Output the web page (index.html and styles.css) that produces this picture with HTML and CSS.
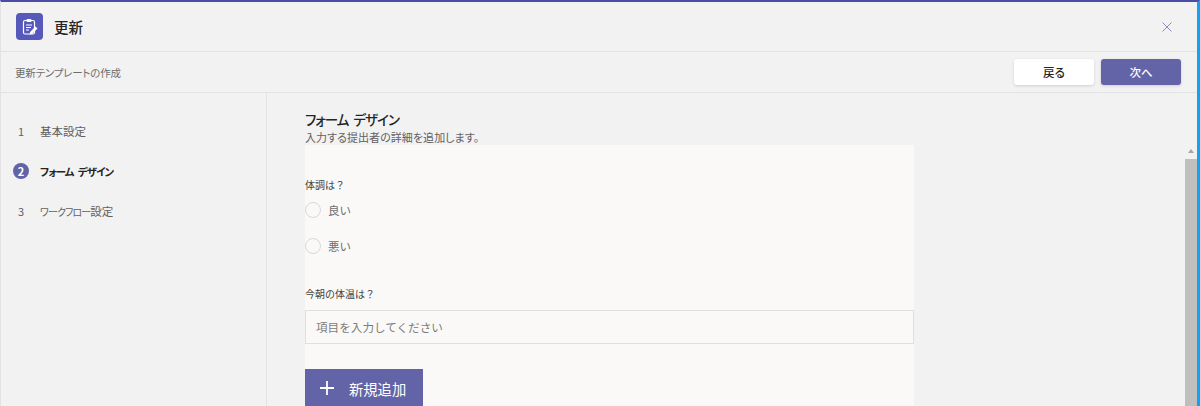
FILE: index.html
```html
<!DOCTYPE html>
<html lang="ja">
<head>
<meta charset="utf-8">
<title>更新</title>
<link rel="stylesheet" href="styles.css">
</head>
<body>
<div class="window">
  <header class="title-bar">
    <div class="title-left">
      <span class="app-icon">
        <svg viewBox="0 0 16 18" width="16" height="18" fill="none">
          <rect x="1.5" y="2.5" width="11" height="13.5" rx="1.5" stroke="#fff" stroke-width="1.2"/>
          <rect x="4.5" y="1" width="5" height="3" rx="1" fill="#fff"/>
          <path d="M4 7h6M4 9.5h5M4 12h3" stroke="#fff" stroke-width="1"/>
          <path d="M7.5 16.5l.6-2.6 5.4-5.4 2 2-5.4 5.4z" fill="#fff"/>
        </svg>
      </span>
      <h1 class="title">更新</h1>
    </div>
    <svg class="close" viewBox="0 0 10 10" width="10" height="10"><path d="M.5.5l9 9M9.5.5l-9 9" stroke="#8d8cc0" stroke-width="1" fill="none"/></svg>
  </header>
  <div class="sub-bar">
    <span class="sub-title">更新テンプレートの作成</span>
    <div class="actions">
      <button class="btn btn-back">戻る</button>
      <button class="btn btn-next">次へ</button>
    </div>
  </div>
  <div class="body">
    <nav class="steps">
      <div class="step"><span class="step-num">1</span><span>基本設定</span></div>
      <div class="step step-active"><span class="step-num step-badge">2</span><span class="kana-bold">フォーム デザイン</span></div>
      <div class="step"><span class="step-num">3</span><span><span class="kana">ワークフロー</span>設定</span></div>
    </nav>
    <main class="content">
      <h2 class="heading">フォーム デザイン</h2>
      <p class="desc">入力する提出者の詳細を追加します。</p>
      <section class="form-card">
        <div class="question">体調は？</div>
        <label class="option"><span class="radio"></span>良い</label>
        <label class="option"><span class="radio"></span>悪い</label>
        <div class="question q-second">今朝の体温は？</div>
        <div class="text-input">項目を入力してください</div>
        <button class="add-btn">
          <svg viewBox="0 0 14 14" width="14" height="14"><path d="M7 0v14M0 7h14" stroke="#fff" stroke-width="1.8" fill="none"/></svg>
          <span>新規追加</span>
        </button>
      </section>
    </main>
    <div class="scrollbar">
      <span class="scroll-arrow"></span>
      <span class="scroll-thumb"></span>
    </div>
  </div>
</div>
</body>
</html>
```
FILE: styles.css
```css
* { box-sizing: border-box; }
html, body { margin: 0; height: 100%; overflow: hidden; }
body { font-family: "Noto Sans CJK JP", "Noto Sans", sans-serif; background: #f3f2f3; color: #252423; font-feature-settings: "palt"; }
.window { height: 406px; display: flex; flex-direction: column; border-top: 2px solid #4b4ca3; border-left: 1px solid #e4e3e4; border-right: 3px solid #0fa3f5; overflow: hidden; }
.title-bar { height: 50px; flex: none; display: flex; align-items: center; justify-content: space-between; padding: 0 25px 0 15px; border-bottom: 1px solid #e4e3e4; }
.title-left { display: flex; align-items: center; gap: 11px; }
.app-icon { width: 27px; height: 27px; border-radius: 4px; background: #5659b9; display: flex; align-items: center; justify-content: center; }
.title { margin: 0; font-size: 14.5px; font-weight: 500; font-feature-settings: normal; }
.close { display: block; }
.sub-bar { height: 41px; flex: none; display: flex; align-items: center; justify-content: space-between; padding: 0 16px 0 14px; border-bottom: 1px solid #e4e3e4; }
.sub-title { font-size: 10.5px; letter-spacing: -.2px; color: #6f6e6e; font-weight: 400; }
.actions { display: flex; gap: 7px; }
.btn { width: 80px; height: 26px; border: 0; border-radius: 3px; font-family: inherit; font-feature-settings: inherit; font-size: 11.5px; font-weight: 500; padding: 0; box-shadow: 0 1px 3px rgba(0,0,0,.15); }
.btn-back { background: #fff; color: #252423; }
.btn-next { background: #6264a7; color: #fff; }
.body { flex: 1; min-height: 0; display: flex; }
.steps { width: 266px; flex: none; border-right: 1px solid #e4e3e4; padding-top: 18px; }
.step { height: 40px; display: flex; align-items: center; gap: 11px; padding-left: 12px; font-size: 11.5px; color: #616060; }
.step-num { width: 16px; text-align: center; font-size: 11px; }
.kana { font-size: 10px; letter-spacing: -.9px; }
.kana-bold { font-size: 10.5px; letter-spacing: -1px; word-spacing: 3px; }
.step-active { color: #252423; font-weight: 700; }
.step-badge { height: 16px; border-radius: 50%; background: #6264a7; color: #fff; line-height: 16px; }
.content { width: 609px; flex: none; margin-left: 38px; padding-top: 16px; }
.heading { margin: 0; font-size: 13.5px; letter-spacing: -1px; word-spacing: 3px; line-height: 20px; font-weight: 500; color: #252423; }
.desc { margin: 0; font-size: 11px; letter-spacing: .05px; line-height: 16px; color: #616060; }
.form-card { background: #faf9f8; height: 300px; padding-top: 33px; font-feature-settings: normal; }
.question { font-size: 10px; line-height: 14px; color: #424242; }
.q-second { margin-top: 23px; }
.option { height: 36px; display: flex; align-items: center; gap: 7px; font-size: 11.5px; color: #6f6e6e; }
.radio { width: 16px; height: 16px; border-radius: 50%; border: 1px solid #d9d8d8; background: #faf9f8; }
.text-input { height: 34px; margin-top: 9px; border: 1px solid #e0dfdf; font-size: 11.6px; line-height: 32px; padding-left: 10px; color: #7c7b7b; }
.add-btn { margin-top: 25px; width: 118px; height: 38px; border: 0; background: #6264a7; color: #fff; font-family: inherit; font-feature-settings: inherit; font-size: 14.3px; display: flex; align-items: center; gap: 15px; padding: 0 0 0 15px; }
.scrollbar { margin-left: auto; width: 12px; display: flex; flex-direction: column; align-items: center; padding-top: 56px; }
.scroll-arrow { width: 0; height: 0; border-left: 3px solid transparent; border-right: 3px solid transparent; border-bottom: 4px solid #a5a4a4; }
.scroll-thumb { width: 12px; flex: 1; margin-top: 6px; background: #c0bfbf; }
```
